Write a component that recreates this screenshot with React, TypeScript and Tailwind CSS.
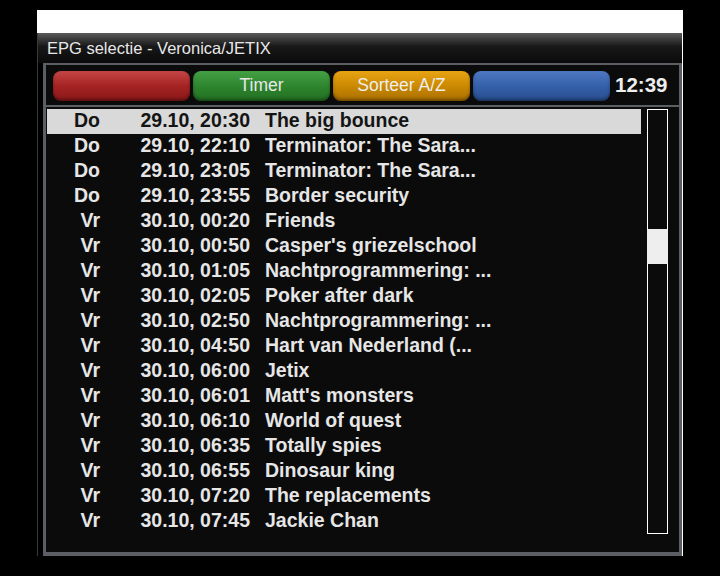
import React from "react";

const rows: [string, string, string][] = [
  ["Do", "29.10, 20:30", "The big bounce"],
  ["Do", "29.10, 22:10", "Terminator: The Sara..."],
  ["Do", "29.10, 23:05", "Terminator: The Sara..."],
  ["Do", "29.10, 23:55", "Border security"],
  ["Vr", "30.10, 00:20", "Friends"],
  ["Vr", "30.10, 00:50", "Casper's griezelschool"],
  ["Vr", "30.10, 01:05", "Nachtprogrammering: ..."],
  ["Vr", "30.10, 02:05", "Poker after dark"],
  ["Vr", "30.10, 02:50", "Nachtprogrammering: ..."],
  ["Vr", "30.10, 04:50", "Hart van Nederland (..."],
  ["Vr", "30.10, 06:00", "Jetix"],
  ["Vr", "30.10, 06:01", "Matt's monsters"],
  ["Vr", "30.10, 06:10", "World of quest"],
  ["Vr", "30.10, 06:35", "Totally spies"],
  ["Vr", "30.10, 06:55", "Dinosaur king"],
  ["Vr", "30.10, 07:20", "The replacements"],
  ["Vr", "30.10, 07:45", "Jackie Chan"],
];

export default function App() {
  return (
    <div
      className="w-[720px] h-[576px] bg-black pt-[10px] pl-[37px] overflow-hidden"
      style={{ fontFamily: '"Liberation Sans", Arial, sans-serif' }}
    >
      <div className="w-[646px] h-[23px] bg-white" />
      <div className="w-[646px] h-[523px] flex flex-col border-r border-white">
        {/* title bar */}
        <div className="h-[30px] flex items-center pl-[9px] border-l border-[#3a3a3a] bg-linear-to-b from-[#5c5c5c] via-[#181818] via-45% to-[#0a0a0a] text-[16.5px] text-[#e8e8e8]">
          EPG selectie - Veronica/JETIX
        </div>
        <div className="flex-1 flex bg-black border-l border-[#3a3a3a]">
          <div className="w-[5px]" />
          <div className="flex-1 flex flex-col border-x-[3px] border-t-2 border-b-[4px] border-[#5b5f64] bg-[#0b0b0b]">
            {/* header */}
            <div className="h-[42px] flex items-start pt-[6px] pl-[7px] border-b-2 border-[#5b5f64]">
              <div className="flex gap-[3px]">
                <div className="w-[137px] h-[30px] rounded-[8px] bg-linear-to-b from-[#c44545] via-[#a52323] to-[#8a1717] shadow-[inset_0_-2px_3px_rgba(0,0,0,0.35)]" />
                <div className="w-[137px] h-[30px] rounded-[8px] bg-linear-to-b from-[#44a044] via-[#2e862e] to-[#226e22] shadow-[inset_0_-2px_3px_rgba(0,0,0,0.35)] flex items-center justify-center pb-px text-[17.5px] text-[#e8e8e8]">
                  Timer
                </div>
                <div className="w-[137px] h-[30px] rounded-[8px] bg-linear-to-b from-[#e8a414] via-[#cc8a02] to-[#a86e00] shadow-[inset_0_-2px_3px_rgba(0,0,0,0.35)] flex items-center justify-center pb-px text-[17.5px] text-[#eeeeee]">
                  Sorteer A/Z
                </div>
                <div className="w-[137px] h-[30px] rounded-[8px] bg-linear-to-b from-[#4f78c2] via-[#3560aa] to-[#284d8e] shadow-[inset_0_-2px_3px_rgba(0,0,0,0.35)]" />
              </div>
              <div className="ml-[5px] mt-[2px] text-[20.5px] font-bold text-[#eeeeee] leading-[24px]">
                12:39
              </div>
            </div>
            {/* list */}
            <div className="flex pt-[2px] pl-px">
              <div className="w-[594px] flex flex-col">
                {rows.map((r, i) => {
                  const sel = i === 0;
                  return (
                    <div
                      key={i}
                      className={
                        "h-[25px] flex items-start text-[19.5px] font-bold leading-[22px] " +
                        (sel ? "bg-[#d9d9d9] text-[#141414]" : "text-[#e6e6e6]")
                      }
                    >
                      <div className="w-[53px] text-right">{r[0]}</div>
                      <div className="w-[150px] text-right">{r[1]}</div>
                      <div className="pl-[15px] whitespace-nowrap">{r[2]}</div>
                    </div>
                  );
                })}
              </div>
              <div className="ml-[6px] w-[21px] h-[425px] border border-white bg-[#0b0b0b]">
                <div className="mt-[119px] h-[35px] bg-[#eeeeee] -mx-px" />
              </div>
            </div>
          </div>
        </div>
      </div>
    </div>
  );
}
